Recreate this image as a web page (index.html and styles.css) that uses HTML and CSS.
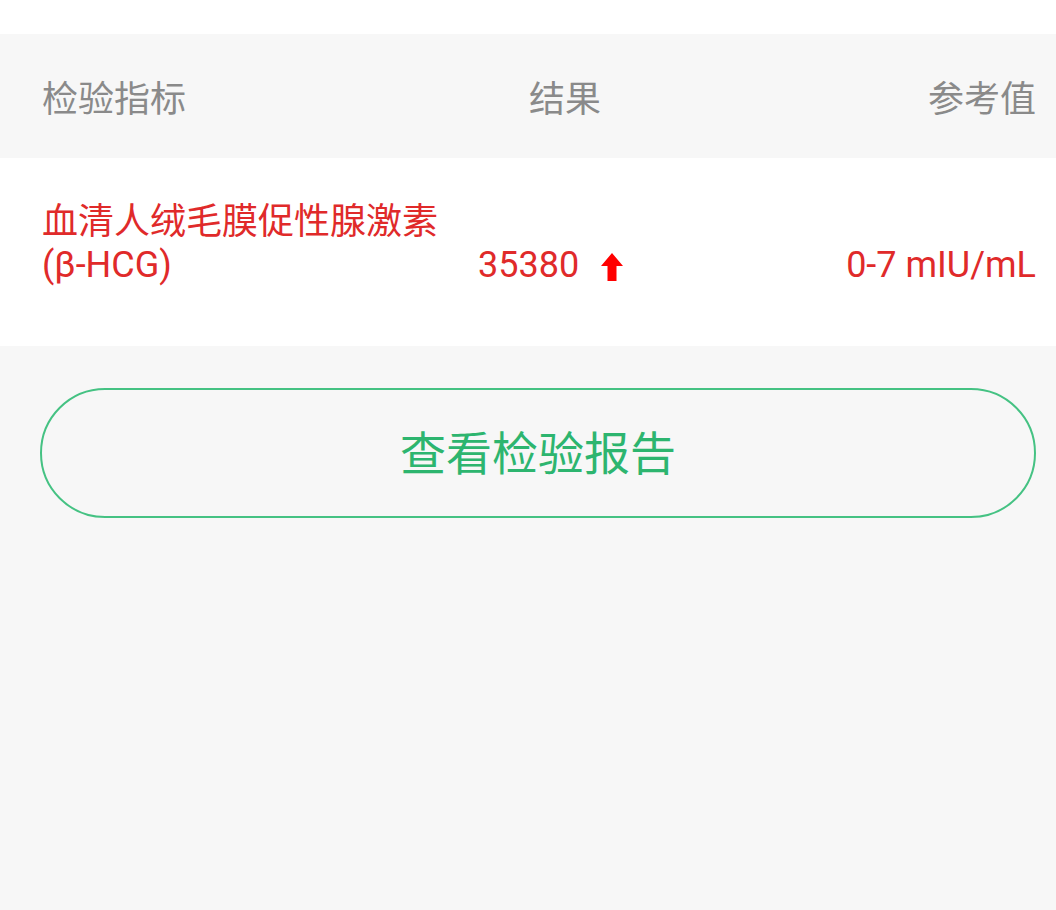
FILE: index.html
```html
<!DOCTYPE html>
<html lang="zh-CN">
<head>
<meta charset="utf-8">
<link rel="stylesheet" href="styles.css">
</head>
<body>
<div class="top"></div>
<div class="table">
  <div class="head">
    <div class="c1">检验指标</div>
    <div class="c2">结果</div>
    <div class="c3">参考值</div>
  </div>
  <div class="row">
    <div class="c1 name"><span class="cjk">血清人绒毛膜促性腺激素</span><br>(β-HCG)</div>
    <div class="c2 val">35380<svg class="arrow" width="22" height="28" viewBox="0 0 22 28"><path d="M11 0 L22 13 L15.5 13 L15.5 28 L6.5 28 L6.5 13 L0 13 Z" fill="#ff0000"/></svg></div>
    <div class="c3 range">0-7 mIU/mL</div>
  </div>
</div>
<div class="actions">
  <button class="btn">查看检验报告</button>
</div>
</body>
</html>
```
FILE: styles.css
```css
html, body {
  margin: 0;
  padding: 0;
  background: #f7f7f7;
  font-family: Roboto, "Noto Sans CJK SC", sans-serif;
}
.top {
  height: 34px;
  background: #ffffff;
}
.head, .row {
  display: grid;
  grid-template-columns: 436px 174px 1fr;
  padding: 0 20px 0 42px;
}
.head {
  height: 124px;
  align-items: center;
  color: #8a8a8a;
  font-size: 36px;
}
.head .c2 { text-align: center; }
.head .c3 { text-align: right; }
.row {
  background: #ffffff;
  padding-top: 43px;
  padding-bottom: 59px;
  align-items: end;
  color: #e02a2a;
  font-size: 36px;
  line-height: 43px;
}
.name {
  font-size: 36px;
}
.cjk {
  letter-spacing: 0;
}
.val {
  display: flex;
  align-items: center;
}
.arrow {
  margin-left: 22px;
  margin-top: 2px;
}
.range { text-align: right; }
.actions {
  padding: 42px 20px 0 40px;
}
.btn {
  display: block;
  width: 100%;
  height: 130px;
  border: 2px solid #45c283;
  border-radius: 65px;
  background: transparent;
  color: #2db56f;
  font-family: Roboto, "Noto Sans CJK SC", sans-serif;
  font-size: 46px;
  padding: 0 0 6px 0;
}
```
